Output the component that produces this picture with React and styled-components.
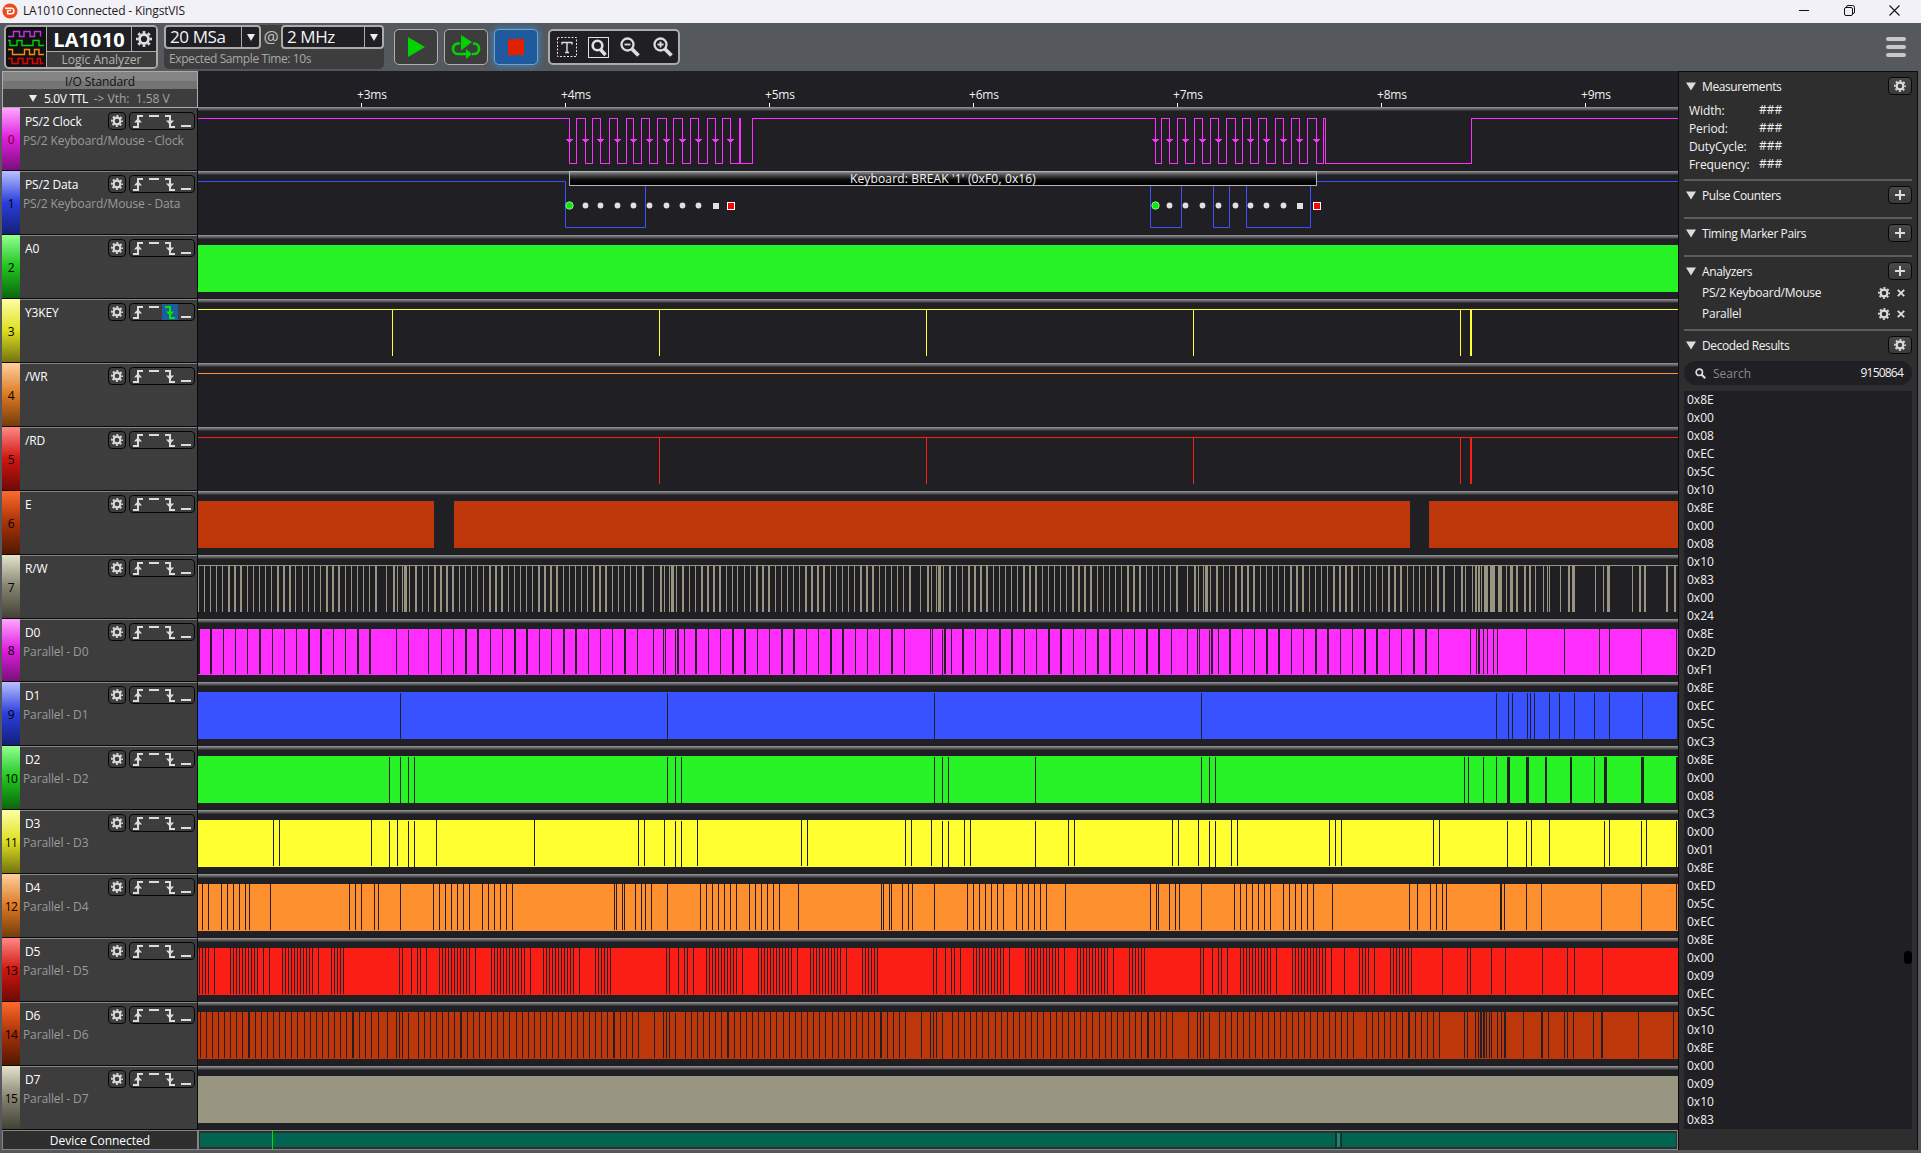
import React from "react";
import styled, { createGlobalStyle, css } from "styled-components";

const INK = "#1f1f24";
const PANEL = "#2e2e2e";
const SIDE = "#3d3d3d";
const CHROME = "#55595d";
const EDGE = "#ababab";

const GlobalStyle = createGlobalStyle`
  *, *::before, *::after { box-sizing: border-box; }
  html, body { margin: 0; padding: 0; background: ${CHROME}; overflow: hidden; }
  body {
    font-family: "Open Sans", "Noto Sans", sans-serif;
    font-size: 12px;
    line-height: 16px;
    color: #f2f2f2;
  }
  svg { display: block; flex: none; }
`;

/* ---------- signal data ---------- */

const TRACK_X = 198;
const TRACK_W = 1480;

// Expands "22 102w 571h 63*3 580~670" lists into pulses {x, w, high}.
function pulses(origin, pitch, list) {
  const out = [];
  list.split(" ").forEach((token) => {
    if (token.includes("~")) {
      const [a, b] = token.split("~").map(Number);
      for (let v = a; v <= b; v += 9) out.push({ x: Math.round(origin + v / pitch - 0.5), w: 1 });
      return;
    }
    const high = token.endsWith("h");
    const wide = token.endsWith("w");
    const [num, mult] = token.replace(/[hw]/g, "").split("*").map(Number);
    const w = mult || (wide ? 2 : 1);
    out.push({ x: Math.round(origin + num / pitch - w / 2), w, high });
  });
  return out;
}

const A = (list) => pulses(190, 1568 / 600, list);
const B = (list) => pulses(780, 3, list);
const C = (list) => pulses(1270, 3, list);
const allHigh = (arr) => arr.map((p) => ({ ...p, high: true }));

const RW = [
  ...A("22 38 54 69.5 85 102w 117w 133w 150 166 181 197 213 230w 245w 261w 277 293 309 325 341 358w 374w 389w 406 422 437 453 469 486w 514 534w 543 555.5 563*3 573.5 590w 607 623 641w 656w 671w 687w 704 720 736 752 767 784w 800w 815w 832 848 863 879 895 912w 927w 943w 959w 976 992 1007 1023 1038 1056w 1071w 1087w 1104 1120 1135 1151 1166 1183w 1211 1230w 1240 1253 1261*3 1271 1288w 1305 1321 1338w 1353w 1369w 1385w 1401 1417 1432 1448 1464 1481w 1497w 1513w 1529"),
  ...B("4 22 40 58 78w 96w 114w 132w 151 169 187 205 223 243w 261w 279w 298 316 334 352 370 390w 421 444w 454 469 478*3 490 510w 529 547 567w 585w 603w 621w 640 658 676 694 712 732w 750w 768w 787 805 823 841 859 879w 897w 915w 933w 952 970 988 1006 1024 1044w 1062w 1080w 1099 1117 1135 1153 1171 1191w 1222 1245w 1255 1270 1279*3 1291 1311w 1330 1348 1368w 1386w 1404w 1422w 1441 1459"),
  ...C("7 25 43 63w 81w 99w 118 136 154 172 192w 210w 228w 246w 265 283 301 319 337 357w 375w 393w 412 430 448 466 484 504w 522w 553 576w 586 607 618w 627w 635 648*4 667*5 690*4 710 724*3 741w 765w 780w 796 820 832 838 871 897w 910*3 976 1000 1015*3 1087 1110w 1125w 1191w 1215w"),
];

const D0 = [
  ...A("23w 54w 87 119 150 183w 215 247 278 311w 342w 375 406 439w 470w 540 571h 624 657 688 721w 752w 785 816 849w 880w 913 944 977w 1008w 1041 1073 1104 1136w 1169 1211 1238 1243 1269h 1275w 1292 1322w 1355 1386 1418w 1450w 1483 1514"),
  ...B("6w 42w 79 115 152w 189w 226 262 298 336w 373 451 457 487h 495w 514 549w 586 622 660w 696w 733 769 807w 843w 880 916 954w 990w 1027 1063 1101w 1137w 1174 1222 1252 1258 1288h 1296w 1315 1350w 1387 1423 1461w"),
  ...C("27w 64 100 138w 174w 211 247 285w 321w 358 394 432w 468w 505 601 619 627w 640 652 670 682 769 883 988 1018 1114 1219"),
];

const D1 = allHigh([
  ...A("549.5 1247.5"),
  ...B("463 1264"),
  ...C("679 715 727 772 781 793 838 868 913 973 1018 1117 1222"),
]);

const D2 = allHigh([
  ...A("521 549.5 571 586 1247.5 1268 1284"),
  ...B("463 487 505 766 1264 1288 1306"),
  ...C("583 595 640 679 715*3 772*3 828w 903w 973 1006*3 1117*3 1221w"),
]);

const D3 = [
  ...A("218 234 474 521h 542 571h 586h 644 900 1172 1187 1240 1268h 1284h 1326"),
  ...B("64 82 376 394 454 487h 505h 553 571 766h 865 883 1177 1195 1255 1288h 1306h 1354 1372"),
  ...C("178 196 214 490 508 712h 769h 784 838 1003h 1018 1114h 1129 1219h"),
];

const D4 = [
  ...A("32 48 82 98 113 129 145 155 210 417 432 448 482 492 550 636 652 667 683 699 714 730 764 780 795 811 827 842 1109 1114 1130 1135 1164 1180 1190 1206 1248 1334 1349 1365 1381 1397 1412 1428 1462 1478 1493 1509 1525 1540"),
  ...B("55 304 310 328 334 367 385 397 463 562 580 598 616 634 652 670 709 727 745 763 781 799 856 1111 1129 1135 1168 1186 1198 1264 1363 1381 1399 1417 1435 1453 1471"),
  ...C("40 58 76 94 112 130 187 418 442 481 499 517 529 693w 703 769 814 994 1114 1219"),
];

const D5 = [
  ...A("25 33 41 48 64 106 114 121 129 137 145 153 160 168 176 192 207 241 249 257 265 273 281 289 297 304 312 320 336 369 377 385 393 401 547 555 579 594 602 618 652 660 668 675 683 691 699 707 714 722 730 746 788 796 804 811 819 827 835 843 850 858 866 874 890 924 932 940 947 955 963 971 979 986 994 1002 1018 1060 1068 1076 1083 1091 1099 1245 1253 1276 1292 1300 1316 1349 1357 1365 1373 1381 1389 1397 1405 1412 1420 1428 1444 1485 1493 1501 1509 1517 1525 1532 1540"),
  ...B("7 16 25 34 52 91~181 199 247~292 460 469 496 514 523 541 580~670 688 736~835 853 892~982 1000 1048~1093 1261 1270 1297 1315 1324 1342 1381~1471"),
  ...C("19 67~166 184 223 268~295 313 361~424 517 592 601 664 706 817 892 913 997"),
];

const D6 = [
  ...A("27 43 58 74 90 106 121 137 154w 171 187 202 218 234 249 265 281 299 315 330 346 362 377 393 409 426w 443 458 474 492 516 540 547 555 571h 597 613 628 644 660 675 691 709w 725 741 756 772 788 803 819 835 853 869 884 900 916 931 947 963 981 997 1012 1028 1044 1059 1075 1091 1108w 1125 1140 1156 1172 1214 1238 1245 1253 1268h 1295 1310 1326 1342 1357 1373 1389 1406w 1423 1438 1454 1470 1485 1501 1517 1532"),
  ...B("10 28 46 64 82 100 118 136 157 175 193 211 229 247 265 283 303w 322 340 358 376 424 451 460 469 487h 517 535 553 571 589 607 625 646 664 682 700 718 736 754 772 790 811 829 847 865 883 901 919 937 958 976 994 1012 1030 1048 1066 1084 1104w 1123 1141 1159 1177 1225 1252 1261 1270 1288h 1318 1336 1354 1372 1390 1408 1426 1447 1465"),
  ...C("13 31 49 67 85 103 121 142 160 178 196 214 232 250 289 307 325 343 361 379 397 417w 436 454 472 490 508 583 592 616 625 633w 642w 649 658 664 682 694 705w 760 816w 835 883 892 910 970 996w 1105 1210"),
];

const CLOCK = [
  569, 576, 585, 592, 600, 609, 617, 626, 633, 641, 649, 657, 666, 673, 682, 690, 698, 707, 715, 722, 730, 739, 740, 752,
  1155, 1161, 1169, 1177, 1185, 1194, 1202, 1210, 1218, 1226, 1235, 1242, 1250, 1258, 1266, 1275, 1283, 1291, 1299, 1307, 1316, 1323, 1325, 1471,
];
const DATA = [565, 645, 1150, 1181, 1213, 1229, 1246, 1310];
const BURSTS = [
  [569, 585, 600, 617, 633, 649, 666, 682, 698, 715, 730],
  [1155, 1169, 1185, 1202, 1218, 1235, 1250, 1266, 1283, 1299, 1316],
];

const HUES = [
  { wave: "#ff2eff", top: "#ffa6ff", mid: "#dd1edd", low: "#7a0f7a" },
  { wave: "#3852ff", top: "#b9c0ff", mid: "#2a3fdc", low: "#141f78" },
  { wave: "#26f226", top: "#93ff93", mid: "#1fc41f", low: "#0c660c" },
  { wave: "#ffff30", top: "#ffffa4", mid: "#dede22", low: "#74740c" },
  { wave: "#ff9030", top: "#ffcfa0", mid: "#dc7a22", low: "#743c0c" },
  { wave: "#fb1e14", top: "#ff8a86", mid: "#d01610", low: "#6e0a06" },
  { wave: "#be370a", top: "#ff6a2c", mid: "#a83208", low: "#521802" },
  { wave: "#989681", top: "#e4e4cc", mid: "#85836f", low: "#424136" },
];

const CHANNELS = [
  { name: "PS/2 Clock", sub: "PS/2 Keyboard/Mouse - Clock", kind: "clock" },
  { name: "PS/2 Data", sub: "PS/2 Keyboard/Mouse - Data", kind: "data" },
  { name: "A0", kind: "solid", cuts: [] },
  { name: "Y3KEY", kind: "line", drops: [[392, 1], [659, 1], [926, 1], [1193, 1], [1460, 1], [1470, 2]], armed: true },
  { name: "/WR", kind: "line", drops: [] },
  { name: "/RD", kind: "line", drops: [[659, 1], [926, 1], [1193, 1], [1460, 1], [1470, 2]] },
  { name: "E", kind: "solid", cuts: [], gaps: [[434, 20], [1410, 19]] },
  { name: "R/W", kind: "line", drops: RW.map((p) => [p.x, p.w]) },
  { name: "D0", sub: "Parallel - D0", kind: "solid", cuts: D0 },
  { name: "D1", sub: "Parallel - D1", kind: "solid", cuts: D1 },
  { name: "D2", sub: "Parallel - D2", kind: "solid", cuts: D2 },
  { name: "D3", sub: "Parallel - D3", kind: "solid", cuts: D3 },
  { name: "D4", sub: "Parallel - D4", kind: "solid", cuts: D4 },
  { name: "D5", sub: "Parallel - D5", kind: "solid", cuts: D5 },
  { name: "D6", sub: "Parallel - D6", kind: "solid", cuts: D6 },
  { name: "D7", sub: "Parallel - D7", kind: "solid", cuts: [] },
].map((c, i) => ({ ...c, index: i, hue: HUES[i % 8], height: i === 8 ? 63 : 64 }));

const RESULTS =
  "8E 00 08 EC 5C 10 8E 00 08 10 83 00 24 8E 2D F1 8E EC 5C C3 8E 00 08 C3 00 01 8E ED 5C EC 8E 00 09 EC 5C 10 8E 00 09 10 83".split(" ");

/* ---------- icons ---------- */

const Gear = ({ size = 12, color = "#dcdcdc" }) => (
  <svg width={size} height={size} viewBox="0 0 16 16" fill="none" stroke={color}>
    <circle cx="8" cy="8" r="4.500" strokeWidth="2.800" />
    <circle cx="8" cy="8" r="6.800" strokeWidth="2.400" pathLength="16" strokeDasharray="1 1" strokeDashoffset="0.5" />
  </svg>
);

const LogoMark = () => (
  <svg width="16" height="16" viewBox="0 0 16 16">
    <circle cx="8" cy="8" r="7.6" fill="#f04a16" />
    <path d="M3 5.2h6.2a2.8 2.8 0 0 1 0 5.6H5.6V7.6H9" fill="none" stroke="#fff" strokeWidth="1.5" />
  </svg>
);

const Waves = () => (
  <svg width="38" height="40" viewBox="0 0 38 40" fill="none" strokeWidth="1.4">
    <path d="M2 9.500h5.500v-5h6v5h4.500v-5h6v5h4.500v-5h6v5" stroke="#c030f0" />
    <path d="M2 13.500h2v5h7v-5h5v5h11v-5h6v5h5" stroke="#00d400" />
    <path d="M2 22.500h4.500v5h12v-5h5v5h5v-5h4.500v5h5" stroke="#ff8a10" />
    <path d="M2 31.500h4v5h6v-5h5v5h4.500v-5h5v5h5v-5h3v5h3" stroke="#e80000" />
  </svg>
);

const Lens = ({ sign }) => (
  <svg width="22" height="22" viewBox="0 0 22 22" fill="none" stroke="#dcdcdc">
    <circle cx="8.500" cy="8.500" r="6" strokeWidth="2.300" />
    <path d="M13 13l6.500 6.500" strokeWidth="3.800" />
    <path d={sign === "+" ? "M5.500 8.500h6M8.500 5.500v6" : "M5.500 8.500h6"} strokeWidth="1.800" />
  </svg>
);

const Triggers = ({ armed }) => (
  <svg width="64" height="16" viewBox="0 0 64 16" fill="none" stroke="#dcdcdc" strokeWidth="2">
    {armed && <rect x="32" y="0" width="16" height="16" fill="#1f5c9e" stroke="none" />}
    <path d="M3 14h5V3h5" />
    <path d="M4 9.500l4-4.500 4 4.500z" fill="#dcdcdc" stroke="none" />
    <path d="M19 3h10" />
    <g stroke={armed ? "#00e800" : "#dcdcdc"}>
      <path d="M35 3h5v11h5" />
      <path d="M36 7.500l4 4.500 4-4.500z" fill={armed ? "#00e800" : "#dcdcdc"} stroke="none" />
    </g>
    <path d="M51 13h10" />
  </svg>
);

/* ---------- wave drawings ---------- */

const stepPath = (edges, high, low) => {
  let d = `M${TRACK_X} ${high}`;
  let level = high;
  edges.forEach((x) => {
    level = level === high ? low : high;
    d += `H${x + 0.5}V${level}`;
  });
  return `${d}H${TRACK_X + TRACK_W}`;
};

function Signal({ channel }) {
  const { kind, hue, height } = channel;
  const bottom = height - 7;
  return (
    <svg
      width={TRACK_W}
      height={height}
      viewBox={`${TRACK_X} 0 ${TRACK_W} ${height}`}
      shapeRendering={kind === "data" ? "auto" : "crispEdges"}
    >
      {kind === "clock" && (
        <>
          <path d={stepPath(CLOCK, 11.5, 56.5)} fill="none" stroke={hue.wave} />
          {BURSTS.flat().map((x) => (
            <path key={x} d={`M${x - 3} 32h7v1h-1v1h-1v1h-3v-1h-1v-1h-1z`} fill={hue.wave} />
          ))}
        </>
      )}
      {kind === "data" && (
        <>
          <path d={stepPath(DATA, 10.5, 56.5)} fill="none" stroke={hue.wave} />
          {BURSTS.map((marks) =>
            marks.map((x, i) => {
              if (i === 0) return <circle key={x} cx={x + 0.5} cy="34.500" r="3.700" fill="#00f000" stroke="#b4d8b4" />;
              if (i === 9) return <rect key={x} x={x - 2} y="32" width="6" height="6" fill="#e0e0e0" />;
              if (i === 10) return <rect key={x} x={x - 2.5} y="31.500" width="7" height="7" fill="#f00" stroke="#fff" />;
              return <circle key={x} cx={x + 0.5} cy="34.500" r="2.900" fill="#e0e0e0" />;
            })
          )}
        </>
      )}
      {kind === "line" && (
        <g fill={hue.wave}>
          <rect x={TRACK_X} y="10" width={TRACK_W} height="1" />
          {channel.drops.map(([x, w]) => (
            <rect key={x} x={x} y="10" width={w} height={bottom - 10} />
          ))}
        </g>
      )}
      {kind === "solid" && (
        <>
          <rect x={TRACK_X} y="10" width={TRACK_W} height={bottom - 10} fill={hue.wave} />
          {(channel.gaps || []).map(([x, w]) => (
            <rect key={x} x={x} y="10" width={w} height={bottom - 10} fill={INK} />
          ))}
          {channel.cuts.map((p) => (
            <rect key={p.x} x={p.x} y={p.high ? 11 : 10} width={p.w} height={bottom - 11} fill={INK} />
          ))}
        </>
      )}
    </svg>
  );
}

/* ---------- window chrome ---------- */

const Window = styled.div`
  width: 1921px;
  height: 1153px;
  display: flex;
  flex-direction: column;
  background: ${CHROME};
  overflow: hidden;
  white-space: nowrap;
`;

const TitleBar = styled.header`
  height: 23px;
  flex: none;
  display: flex;
  align-items: center;
  justify-content: space-between;
  padding: 0 21px 2px 2px;
  background: #f3f1f8;
  color: #1a1a1a;
`;

const TitleText = styled.div`
  display: flex;
  align-items: center;
  gap: 5px;
  padding-top: 1px;
  letter-spacing: -0.15px;
`;

const WindowButtons = styled.div`
  display: flex;
  align-items: center;
  gap: 34px;
`;

const Toolbar = styled.div`
  height: 48px;
  flex: none;
  display: flex;
  align-items: flex-start;
  padding: 2px 15px 0 4px;
`;

const DeviceCard = styled.div`
  width: 154px;
  height: 44px;
  display: flex;
  border: 2px solid ${EDGE};
  border-radius: 5px;
  background: #111;
  overflow: hidden;
`;

const DeviceInfo = styled.div`
  flex: 1;
  margin-left: 2px;
  display: flex;
  flex-direction: column;
  border-left: 1px solid ${EDGE};
  background: ${SIDE};
`;

const DeviceTop = styled.div`
  height: 25px;
  display: flex;
  background: ${INK};
  border-bottom: 1px solid ${EDGE};
`;

const DeviceName = styled.div`
  flex: 1;
  font-size: 20px;
  font-weight: 700;
  line-height: 26px;
  text-align: center;
  letter-spacing: 0.1px;
  color: #fff;
`;

const DeviceGear = styled.div`
  width: 25px;
  display: grid;
  place-items: center;
  border-left: 1px solid ${EDGE};
`;

const DeviceKind = styled.div`
  text-align: center;
  line-height: 16px;
  color: #b4b4b4;
`;

const SampleCard = styled.div`
  width: 220px;
  height: 44px;
  margin-left: 6px;
  border-radius: 5px;
  background: ${SIDE};
`;

const SampleRow = styled.div`
  display: flex;
  justify-content: space-between;
  align-items: center;
  font-size: 17px;
  line-height: 18px;
  letter-spacing: -0.4px;
  color: #c0c0c0;
`;

const Select = styled.div`
  width: ${(p) => p.$width}px;
  height: 24px;
  display: flex;
  border: 2px solid ${EDGE};
  border-radius: 4px;
  background: ${INK};
  color: #f4f4f4;
`;

const SelectValue = styled.span`
  flex: 1;
  padding-left: 4px;
  line-height: 20px;
`;

const SelectArrow = styled.span`
  width: 18px;
  display: grid;
  place-items: center;
  border-left: 1px solid ${EDGE};
`;

const SampleNote = styled.div`
  padding: 2px 0 0 5px;
  letter-spacing: -0.4px;
  color: #a8a8a8;
`;

const RunButton = styled.button`
  width: 44px;
  height: 36px;
  margin: 4px 0 0 ${(p) => p.$gap}px;
  padding: 0;
  display: grid;
  place-items: center;
  border: 1px solid #b0b0b0;
  border-radius: 5px;
  background: ${SIDE};
  ${(p) =>
    p.$active &&
    css`
      border-color: #7f9fc0;
      background: #1f5a9e;
      box-shadow: 0 0 6px 1px #2f86c8;
    `}
`;

const ViewTools = styled.div`
  width: 132px;
  height: 36px;
  margin: 4px 0 0 10px;
  display: flex;
  align-items: center;
  justify-content: space-between;
  padding: 0 4px 0 7px;
  border: 2px solid ${EDGE};
  border-radius: 5px;
  background: ${INK};
`;

const MenuBars = styled.div`
  margin: 12px 0 0 auto;
  width: 20px;
  display: flex;
  flex-direction: column;
  gap: 4px;
`;

const MenuBar = styled.i`
  height: 4px;
  border-radius: 2px;
  background: #c8c8c8;
`;

/* ---------- main area ---------- */

const Workspace = styled.main`
  height: 1079px;
  display: flex;
  padding: 0 3px 0 2px;
`;

const Analyzer = styled.section`
  width: 1676px;
  display: flex;
  flex-direction: column;
  background: ${INK};
`;

const RulerRow = styled.div`
  height: 36px;
  display: flex;
`;

const IoBox = styled.div`
  width: 196px;
  height: 37px;
  flex: none;
  display: flex;
  flex-direction: column;
  border: 1px solid ${EDGE};
  background: ${SIDE};
`;

const IoTitle = styled.div`
  height: 17px;
  text-align: center;
  line-height: 20px;
  color: #111;
  background: linear-gradient(#848484 0 50%, #747474 50%);
  letter-spacing: -0.1px;
`;

const IoValue = styled.div`
  flex: 1;
  display: flex;
  align-items: center;
  gap: 7px;
  padding: 1px 0 0 26px;
  color: #fff;
  letter-spacing: -0.35px;
`;

const Dim = styled.span`
  color: #a4a4a4;
  letter-spacing: 0;
`;

const Ruler = styled.div`
  flex: 1;
  min-width: 0;
  display: flex;
  overflow: hidden;
  padding-left: 159px;
`;

const Tick = styled.div`
  width: 204px;
  flex: none;
  display: flex;
  flex-direction: column;
  padding-top: 16px;
  letter-spacing: -0.2px;

  &::after {
    content: "";
    width: 1px;
    height: 4px;
    margin-left: 4px;
    background: #fff;
  }
`;

const ChannelRow = styled.div`
  position: relative;
  height: ${(p) => p.$height}px;
  flex: none;
  display: flex;
`;

const ChannelHead = styled.div`
  width: 196px;
  display: flex;
  border-bottom: 1px solid #0a0a0a;
  border-right: 1px solid #0a0a0a;
  background: ${SIDE};
  margin-top: ${(p) => (p.$first ? 1 : 0)}px;
`;

const ChannelNumber = styled.div`
  width: 18px;
  display: grid;
  place-items: center;
  padding-top: 2px;
  color: ${(p) => (p.$alert ? "#7a0030" : "#000")};
  background: linear-gradient(${(p) => p.$hue.top}, ${(p) => p.$hue.mid} 50%, ${(p) => p.$hue.low});
  letter-spacing: -0.5px;
`;

const ChannelBody = styled.div`
  flex: 1;
  border-top: ${(p) => (p.$first ? 0 : 1)}px solid #858585;
  padding: ${(p) => (p.$first ? 4 : 3)}px 2px 0 3px;
`;

const ChannelTop = styled.div`
  height: 18px;
  display: flex;
  gap: 3px;
`;

const ChannelName = styled.span`
  flex: 1;
  padding-left: 2px;
  line-height: 20px;
  color: #fff;
  letter-spacing: -0.15px;
`;

const ChannelSub = styled.div`
  padding-top: 3px;
  color: #9a9a9a;
  letter-spacing: -0.12px;
`;

const DarkBox = styled.span`
  width: ${(p) => p.$width}px;
  height: 18px;
  display: grid;
  place-items: center;
  border: 1px solid #050505;
  border-radius: 4px;
`;

const Track = styled.div`
  flex: 1;
  background: linear-gradient(#8c8c8e 0 1px, #727274 1px 2px, #565658 2px 3px, #38383b 3px 4px, ${INK} 4px);
`;

const DecodeBubble = styled.div`
  position: absolute;
  left: 567px;
  top: 0;
  width: 748px;
  height: 15px;
  border: 1px solid #b4b4b4;
  background: linear-gradient(#8a8a8a, #4a4a4a 25%, #0a0a0a 60%, #000);
  line-height: 13px;
  text-align: center;
  letter-spacing: 0.15px;
  color: #f4f4f4;
`;

const StatusRow = styled.footer`
  height: 20px;
  display: flex;
  background: ${PANEL};
`;

const StatusText = styled.div`
  width: 196px;
  border: 1px solid #858585;
  text-align: center;
  line-height: 19px;
  color: #fff;
`;

const Overview = styled.div`
  position: relative;
  flex: 1;
  padding: 2px 1px;
  border: 1px solid #858585;
`;

const OverviewFill = styled.div`
  height: 14px;
  background: #006450;
`;

const OverviewCursor = styled.i`
  position: absolute;
  left: 73px;
  top: -1px;
  width: 1px;
  height: 20px;
  background: #00e000;
`;

const OverviewWindow = styled.i`
  position: absolute;
  left: 1136px;
  top: 0;
  width: 7px;
  height: 18px;
  border: 2px solid rgba(10, 40, 34, 0.85);
  background: #2f7d6c;
`;

/* ---------- right panel ---------- */

const Panel = styled.aside`
  width: 240px;
  display: flex;
  flex-direction: column;
  padding: 0 5px 0 5px;
  border: 1px solid #0c0c0c;
  border-bottom: 0;
  background: ${PANEL};
`;

const Section = styled.section`
  height: ${(p) => p.$height}px;
  flex: none;
  padding-top: 5px;
  border-bottom: ${(p) => (p.$last ? 0 : 2)}px solid #5a5c5f;
`;

const SectionHead = styled.div`
  height: 18px;
  display: flex;
  align-items: center;
  gap: 6px;
  padding-left: 2px;
`;

const SectionTitle = styled.span`
  flex: 1;
  line-height: 20px;
  padding-top: 2px;
  letter-spacing: -0.4px;
`;

const PanelButton = styled.span`
  width: 24px;
  height: 18px;
  display: grid;
  place-items: center;
  border: 1px solid #080808;
  border-radius: 4px;
  background: linear-gradient(#484848, #3a3a3a);
`;

const MeasureGrid = styled.dl`
  margin: 7px 0 0 5px;
  display: grid;
  grid-template-columns: 70px auto;
  grid-auto-rows: 18px;
  line-height: 18px;
`;

const MeasureName = styled.dt`
  margin: 0;
  letter-spacing: -0.1px;
`;

const MeasureValue = styled.dd`
  margin: -1px 0 0;
`;

const AnalyzerItem = styled.div`
  height: 21px;
  display: flex;
  align-items: center;
  gap: 7px;
  padding: 0 7px 0 18px;
`;

const AnalyzerName = styled.span`
  flex: 1;
  padding-top: 1px;
  letter-spacing: -0.25px;
`;

const AnalyzerList = styled.div`
  padding-top: 2px;
`;

const SearchBox = styled.div`
  height: 24px;
  flex: none;
  display: flex;
  align-items: center;
  padding: 0 8px 0 11px;
  border-radius: 12px;
  background: ${INK};
`;

const SearchHint = styled.span`
  flex: 1;
  padding: 1px 0 0 7px;
  color: #8a8a8a;
`;

const ResultCount = styled.span`
  letter-spacing: -0.8px;
  padding-right: 1px;
`;

const ResultList = styled.div`
  position: relative;
  height: 738px;
  margin-top: 6px;
  padding-left: 3px;
  background: ${INK};
`;

const ResultItem = styled.div`
  height: 18px;
  line-height: 18px;
`;

const ScrollKnob = styled.i`
  position: absolute;
  right: 0;
  top: 560px;
  width: 8px;
  height: 13px;
  border-radius: 5px;
  background: #000;
`;

const Caret = () => (
  <svg width="10" height="9" viewBox="0 0 10 9">
    <path d="M0 .5h10L5 8.500z" fill="#dcdcdc" />
  </svg>
);

const SmallCaret = () => (
  <svg width="8" height="7" viewBox="0 0 8 7">
    <path d="M0 0h8L4 7z" fill="#ececec" />
  </svg>
);

const Plus = () => (
  <svg width="10" height="10" viewBox="0 0 10 10">
    <path d="M5 0v10M0 5h10" stroke="#dcdcdc" strokeWidth="2" />
  </svg>
);

const Cross = () => (
  <svg width="8" height="8" viewBox="0 0 8 8">
    <path d="M.8 .8l6.400 6.400M7.200 .8L.8 7.200" stroke="#dcdcdc" strokeWidth="1.900" />
  </svg>
);

const Head = ({ title, icon }) => (
  <SectionHead>
    <Caret />
    <SectionTitle>{title}</SectionTitle>
    <PanelButton>{icon === "gear" ? <Gear /> : <Plus />}</PanelButton>
  </SectionHead>
);

export default function App() {
  return (
    <Window>
      <GlobalStyle />
      <TitleBar>
        <TitleText>
          <LogoMark />
          LA1010 Connected - KingstVIS
        </TitleText>
        <WindowButtons>
          <svg width="11" height="11" viewBox="0 0 11 11"><path d="M0 5.500h10" stroke="#111" /></svg>
          <svg width="11" height="11" viewBox="0 0 11 11" fill="none" stroke="#111">
            <rect x=".5" y="2.500" width="8" height="8" rx="1.500" />
            <path d="M2.500 2.500V2A1.500 1.500 0 0 1 4 .5h4.500a2 2 0 0 1 2 2V7A1.500 1.500 0 0 1 9 8.500h-.5" />
          </svg>
          <svg width="11" height="11" viewBox="0 0 11 11"><path d="M.5 .5l10 10M10.500 .5l-10 10" stroke="#111" strokeWidth="1.100" /></svg>
        </WindowButtons>
      </TitleBar>

      <Toolbar>
        <DeviceCard>
          <Waves />
          <DeviceInfo>
            <DeviceTop>
              <DeviceName>LA1010</DeviceName>
              <DeviceGear><Gear size={16} /></DeviceGear>
            </DeviceTop>
            <DeviceKind>Logic Analyzer</DeviceKind>
          </DeviceInfo>
        </DeviceCard>
        <SampleCard>
          <SampleRow>
            <Select $width={97}>
              <SelectValue>20 MSa</SelectValue>
              <SelectArrow><SmallCaret /></SelectArrow>
            </Select>
            @
            <Select $width={103}>
              <SelectValue>2 MHz</SelectValue>
              <SelectArrow><SmallCaret /></SelectArrow>
            </Select>
          </SampleRow>
          <SampleNote>Expected Sample Time: 10s</SampleNote>
        </SampleCard>
        <RunButton $gap={10}>
          <svg width="18" height="20" viewBox="0 0 18 20"><path d="M1 0l17 10L1 20z" fill="#00d400" /></svg>
        </RunButton>
        <RunButton $gap={6}>
          <svg width="30" height="24" viewBox="0 0 30 24" fill="none" stroke="#00d400" strokeWidth="2.600">
            <path d="M9 8.500H7a5 5 0 0 0-5 5v.5a5 5 0 0 0 5 5h10" />
            <path d="M22 8.500h1a5 5 0 0 1 5 5v.5a5 5 0 0 1-5 5h-2" />
            <path d="M10 0l11 7-11 8.500z" fill="#00d400" stroke="none" />
            <path d="M15 14l6 5-6 5z" fill="#00d400" stroke="none" />
          </svg>
        </RunButton>
        <RunButton $gap={6} $active>
          <svg width="16" height="16"><rect width="16" height="16" fill="#e02000" /></svg>
        </RunButton>
        <ViewTools>
          <svg width="20" height="20" viewBox="0 0 20 20" fill="none" stroke="#e0e0e0">
            <rect x=".5" y=".5" width="19" height="19" strokeDasharray="2 1.500" />
            <path d="M5 5.500h10M10 5.500v10M8 15.500h4M5 5v2.500M15 5v2.500" strokeWidth="1.400" />
          </svg>
          <svg width="21" height="21" viewBox="0 0 21 21" fill="none" stroke="#e0e0e0">
            <rect x=".5" y=".5" width="20" height="20" />
            <circle cx="9.500" cy="8.500" r="4.800" strokeWidth="2.600" />
            <path d="M12.500 12.500l5 5.500" strokeWidth="3.400" />
          </svg>
          <Lens sign="-" />
          <Lens sign="+" />
        </ViewTools>
        <MenuBars>
          <MenuBar />
          <MenuBar />
          <MenuBar />
        </MenuBars>
      </Toolbar>

      <Workspace>
        <Analyzer>
          <RulerRow>
            <IoBox>
              <IoTitle>I/O Standard</IoTitle>
              <IoValue>
                <SmallCaret />
                <span>5.0V TTL <Dim>&nbsp;-&gt; Vth: &nbsp;1.58 V</Dim></span>
              </IoValue>
            </IoBox>
            <Ruler>
              {[3, 4, 5, 6, 7, 8, 9].map((n) => (
                <Tick key={n}>+{n}ms</Tick>
              ))}
            </Ruler>
          </RulerRow>

          {CHANNELS.map((ch) => (
            <ChannelRow key={ch.name} $height={ch.height}>
              <ChannelHead $first={ch.index === 0}>
                <ChannelNumber $hue={ch.hue} $alert={ch.index === 0}>{ch.index}</ChannelNumber>
                <ChannelBody $first={ch.index === 0}>
                  <ChannelTop>
                    <ChannelName>{ch.name}</ChannelName>
                    <DarkBox $width={18}><Gear /></DarkBox>
                    <DarkBox $width={66}><Triggers armed={ch.armed} /></DarkBox>
                  </ChannelTop>
                  {ch.sub && <ChannelSub>{ch.sub}</ChannelSub>}
                </ChannelBody>
              </ChannelHead>
              <Track><Signal channel={ch} /></Track>
              {ch.kind === "data" && <DecodeBubble>Keyboard: BREAK '1' (0xF0, 0x16)</DecodeBubble>}
            </ChannelRow>
          ))}

          <StatusRow>
            <StatusText>Device Connected</StatusText>
            <Overview>
              <OverviewFill />
              <OverviewCursor />
              <OverviewWindow />
            </Overview>
          </StatusRow>
        </Analyzer>

        <Panel>
          <Section $height={109}>
            <Head title="Measurements" icon="gear" />
            <MeasureGrid>
              {["Width:", "Period:", "DutyCycle:", "Frequency:"].map((label) => (
                <React.Fragment key={label}>
                  <MeasureName>{label}</MeasureName>
                  <MeasureValue>###</MeasureValue>
                </React.Fragment>
              ))}
            </MeasureGrid>
          </Section>
          <Section $height={38}><Head title="Pulse Counters" /></Section>
          <Section $height={38}><Head title="Timing Marker Pairs" /></Section>
          <Section $height={74}>
            <Head title="Analyzers" />
            <AnalyzerList>
              {["PS/2 Keyboard/Mouse", "Parallel"].map((name) => (
                <AnalyzerItem key={name}>
                  <AnalyzerName>{name}</AnalyzerName>
                  <Gear size={12} />
                  <Cross />
                </AnalyzerItem>
              ))}
            </AnalyzerList>
          </Section>
          <Section $height={30} $last><Head title="Decoded Results" icon="gear" /></Section>
          <SearchBox>
            <svg width="11" height="11" viewBox="0 0 11 11" fill="none" stroke="#dcdcdc">
              <circle cx="4.300" cy="4.300" r="3.200" strokeWidth="1.600" />
              <path d="M6.500 6.500l3.700 3.700" strokeWidth="2.200" />
            </svg>
            <SearchHint>Search</SearchHint>
            <ResultCount>9150864</ResultCount>
          </SearchBox>
          <ResultList>
            {RESULTS.map((value, i) => (
              <ResultItem key={i}>0x{value}</ResultItem>
            ))}
            <ScrollKnob />
          </ResultList>
        </Panel>
      </Workspace>
    </Window>
  );
}
